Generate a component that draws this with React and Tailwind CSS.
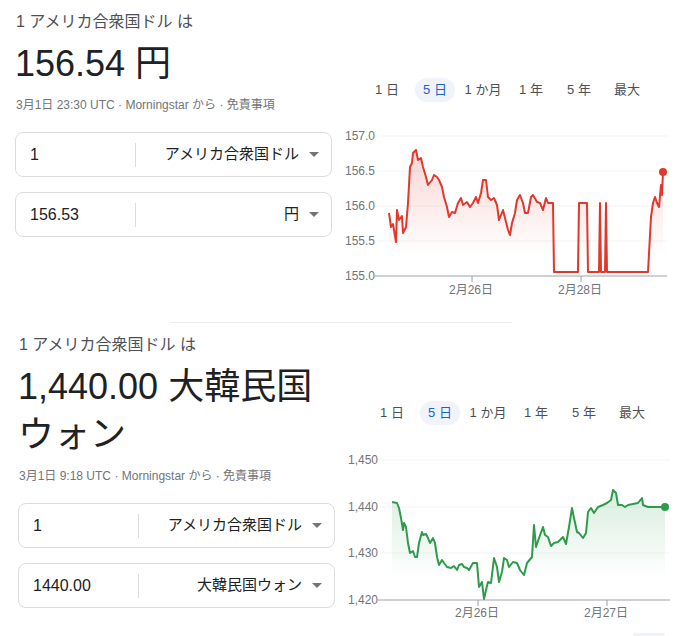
import React from "react";

const jpyPoints = [
  [389, 213], [391, 227], [393, 224], [396, 242], [397, 210], [399, 220], [402, 216], [403, 233], [406, 227],
  [408, 203], [410, 167], [412, 163], [413, 153], [416, 150], [418, 160], [421, 158], [423, 167], [426, 177],
  [428, 185], [432, 180], [434, 175], [437, 177], [439, 180], [442, 187], [444, 197], [447, 207], [449, 217],
  [452, 212], [455, 213], [458, 203], [461, 198], [463, 205], [467, 202], [470, 207], [473, 203], [476, 197],
  [478, 203], [481, 193], [483, 180], [486, 180], [488, 197], [491, 200], [494, 198], [497, 205], [499, 220],
  [503, 210], [506, 222], [508, 230], [510, 235], [512, 223], [515, 213], [517, 200], [520, 195], [523, 203],
  [525, 213], [528, 213], [531, 197], [533, 195], [537, 202], [540, 203], [543, 210], [546, 198], [548, 203],
  [553, 203], [554, 272], [578, 272], [579, 203], [587, 203], [588, 272], [599, 272], [600, 203], [601, 272],
  [605, 272], [606, 203], [607, 272], [648, 272], [651, 217], [653, 203], [655, 197], [657, 203], [659, 207],
  [661, 185], [662, 195], [663, 172],
];

const krwPoints = [
  [392, 502], [397, 503], [399, 508], [401, 518], [403, 530], [404, 523], [406, 527], [408, 543], [410, 553],
  [413, 551], [415, 557], [417, 557], [419, 543], [422, 532], [423, 535], [426, 534], [428, 538], [430, 543],
  [433, 538], [435, 543], [437, 557], [439, 565], [442, 560], [444, 563], [447, 567], [451, 568], [454, 566],
  [457, 570], [459, 565], [462, 564], [464, 567], [467, 568], [469, 570], [473, 563], [477, 563], [479, 587],
  [482, 582], [484, 599], [486, 590], [488, 582], [491, 583], [494, 558], [497, 567], [499, 582], [502, 572],
  [504, 558], [507, 560], [509, 567], [513, 562], [517, 563], [520, 570], [524, 575], [527, 563], [532, 557],
  [534, 525], [536, 547], [539, 538], [543, 527], [545, 535], [548, 537], [551, 546], [554, 543], [558, 542],
  [563, 537], [566, 544], [569, 527], [572, 508], [574, 518], [577, 532], [579, 533], [583, 538], [586, 533],
  [588, 512], [591, 508], [594, 513], [598, 507], [603, 505], [607, 503], [611, 500], [613, 490], [616, 493],
  [618, 505], [622, 505], [625, 507], [628, 505], [633, 504], [638, 503], [642, 498], [643, 505], [648, 507],
  [660, 507], [665, 507],
];

const tabs = ["1 日", "5 日", "1 か月", "1 年", "5 年", "最大"];

// chart drawn in page coordinates, the viewBox starts where the svg sits
const Chart = ({ box, points, color, id, yTicks, xTicks, x1, x2, labelEnd, xLabelY, extra }) => {
  const line = points.map((p) => p.join(",")).join(" ");
  const first = points[0];
  const last = points[points.length - 1];
  const base = yTicks[yTicks.length - 1].y;
  const area = `${line} ${last[0]},${base} ${first[0]},${base}`;
  return (
    <svg width={box[2]} height={box[3]} viewBox={box.join(" ")} className="block" fontFamily="Liberation Sans, Noto Sans CJK JP, sans-serif">
      <defs>
        <linearGradient id={id} x1="0" y1={yTicks[0].y} x2="0" y2={base} gradientUnits="userSpaceOnUse">
          <stop offset="0" stopColor={color} stopOpacity="0.24" />
          <stop offset="0.85" stopColor={color} stopOpacity="0" />
        </linearGradient>
      </defs>
      {yTicks.slice(0, -1).map((t) => (
        <line key={t.y} x1={x1} x2={x2} y1={t.y} y2={t.y} stroke="#f1f3f4" strokeWidth="1" />
      ))}
      {yTicks.map((t) => (
        <text key={t.label} x={labelEnd} y={t.y + 4} textAnchor="end" fontSize="12" fill="#70757a">
          {t.label}
        </text>
      ))}
      <polygon points={area} fill={`url(#${id})`} />
      <line x1={x1 - 2} x2={x2} y1={base} y2={base} stroke="#bdc1c6" strokeWidth="1.5" />
      {xTicks.map((t) => (
        <g key={t.label}>
          <line x1={t.x} x2={t.x} y1={base} y2={base + 6} stroke="#9aa0a6" strokeWidth="1" />
          <text x={t.x - 1} y={xLabelY} textAnchor="middle" fontSize="12" fill="#70757a">
            {t.label}
          </text>
        </g>
      ))}
      <polyline points={line} fill="none" stroke={color} strokeWidth="2" strokeLinejoin="round" />
      <circle cx={last[0]} cy={last[1]} r="4" fill={color} />
      {extra}
    </svg>
  );
};

const Tabs = ({ offset }) => (
  <div className={`flex h-6 items-center ${offset}`}>
    {tabs.map((t) => (
      <div key={t} className="flex w-12 justify-center">
        {t === "5 日" ? (
          <span className="flex h-6 items-center rounded-full bg-[#f0f3f9] px-2 text-[13px] text-[#1a62d0]">{t}</span>
        ) : (
          <span className="text-[13px] text-[#4d5156]">{t}</span>
        )}
      </div>
    ))}
  </div>
);

const Caret = () => (
  <svg width="10" height="5" viewBox="0 0 10 5" className="ml-[10px] shrink-0">
    <polygon points="0,0 10,0 5,5" fill="#70757a" />
  </svg>
);

const ConvertBox = ({ amount, currency, className }) => (
  <div className={`flex h-[45px] items-center rounded-lg border border-[#dadce0] ${className}`}>
    <div className="flex h-[24px] w-[120px] shrink-0 items-center border-r border-[#dadce0] pl-[14px] text-base text-[#202124]">
      {amount}
    </div>
    <div className="flex flex-1 items-center justify-end pr-[12px] text-[15px] text-[#202124]">
      <span>{currency}</span>
      <Caret />
    </div>
  </div>
);

const Summary = ({ result, time, to, pad }) => (
  <div className={`w-[317px] shrink-0 pt-[11px] ${pad}`}>
    <div className="pl-px text-base leading-[22px] text-[#4d5156]">1 アメリカ合衆国ドル は</div>
    <div className="mt-[7px] text-[36px] leading-[48px] text-[#202124]">{result}</div>
    <div className="mt-[9px] pl-px text-xs leading-4 text-[#70757a]">
      {time} · Morningstar から · 免責事項
    </div>
    <ConvertBox amount="1" currency="アメリカ合衆国ドル" className="mt-[19px]" />
    <ConvertBox amount={to.amount} currency={to.currency} className="mt-[15px]" />
  </div>
);

export default function App() {
  return (
    <div className="h-[636px] w-[681px] overflow-hidden bg-white font-[family-name:'Liberation_Sans','Noto_Sans_CJK_JP',sans-serif]">
      {/* JPY */}
      <div className="flex">
        <div className="w-[340px] shrink-0">
          <Summary result="156.54 円" time="3月1日 23:30 UTC" to={{ amount: "156.53", currency: "円" }} pad="ml-[15px]" />
        </div>
        <div className="flex-1 pt-[78px]">
          <Tabs offset="pl-[23px]" />
          <Chart
            box={[340, 102, 341, 200]}
            id="jpy"
            color="#e0382c"
            points={jpyPoints}
            x1={377}
            x2={667}
            labelEnd={375}
            xLabelY={294}
            yTicks={[
              { y: 136, label: "157.0" },
              { y: 171, label: "156.5" },
              { y: 206, label: "156.0" },
              { y: 241, label: "155.5" },
              { y: 276, label: "155.0" },
            ]}
            xTicks={[
              { x: 472, label: "2月26日" },
              { x: 581, label: "2月28日" },
            ]}
          />
        </div>
      </div>

      <div className="ml-[170px] mt-5 h-px w-[342px] bg-[#ececec]" />

      {/* KRW */}
      <div className="flex">
        <div className="w-[340px] shrink-0">
          <Summary
            result="1,440.00 大韓民国ウォン"
            time="3月1日 9:18 UTC"
            to={{ amount: "1440.00", currency: "大韓民国ウォン" }}
            pad="ml-[18px]"
          />
        </div>
        <div className="flex-1 pt-[78px]">
          <Tabs offset="pl-[28px]" />
          <Chart
            box={[340, 425, 341, 211]}
            id="krw"
            color="#2e9b4c"
            points={krwPoints}
            x1={380}
            x2={670}
            labelEnd={378}
            xLabelY={617}
            yTicks={[
              { y: 460, label: "1,450" },
              { y: 507, label: "1,440" },
              { y: 553, label: "1,430" },
              { y: 600, label: "1,420" },
            ]}
            xTicks={[
              { x: 478, label: "2月26日" },
              { x: 607, label: "2月27日" },
            ]}
            extra={<rect x="633" y="633" width="32" height="6" rx="2" fill="#f1f3f4" />}
          />
        </div>
      </div>
    </div>
  );
}
